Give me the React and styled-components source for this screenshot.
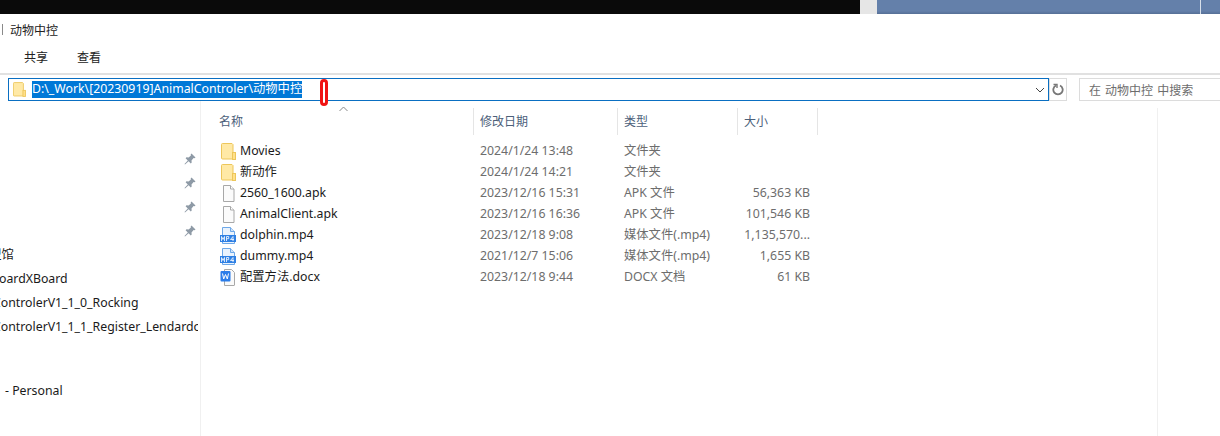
import React from 'react'
import styled, { createGlobalStyle } from 'styled-components'

const GlobalStyle = createGlobalStyle`
    html, body {
        margin: 0;
        padding: 0;
        background: #fff;
    }
    body {
        font-family: "Noto Sans", "Noto Sans CJK SC", sans-serif;
        font-size: 12px;
        color: #1a1a1a;
    }
`;

const Page = styled.div`
    position: relative;
    width: 1220px;
    height: 436px;
    overflow: hidden;
    display: flex;
    flex-direction: column;
    background: #fff;
`;

const TopStrip = styled.div`
    height: 14px;
    flex: none;
    display: grid;
    grid-template-columns: 860px 17px 1fr;
`;

const StripPart = styled.div`
    background: ${p => p.$bg};
`;

const WallpaperPart = styled.div`
    background: linear-gradient(#6480aa 0, #6480aa 11px, #566f96 14px);
    padding-left: 323px;
`;

const WallpaperTick = styled.div`
    width: 1px;
    height: 14px;
    background: #d8e0ea;
`;

const TitleRow = styled.div`
    height: 30px;
    flex: none;
    display: flex;
    align-items: center;
    padding: 1px 0 0 2px;
    box-sizing: border-box;
    gap: 7px;
`;

const TitleTick = styled.div`
    width: 1px;
    height: 11px;
    background: #8a8a8a;
`;

const TitleText = styled.div`
    font-size: 12px;
    color: #222;
`;

const TabRow = styled.div`
    height: 27px;
    flex: none;
    display: flex;
    align-items: center;
    padding: 0 0 2px 24px;
    gap: 29px;
    border-bottom: 2px solid #e1e1e1;
    box-sizing: content-box;
`;

const Tab = styled.div`
    font-size: 12px;
    line-height: 16px;
    color: #222;
`;

const AddressRow = styled.div`
    height: 23px;
    flex: none;
    margin-top: 3px;
    display: flex;
    padding-left: 8px;
`;

const AddressBox = styled.div`
    width: 1041px;
    box-sizing: border-box;
    border: 1px solid #0a6fc2;
    display: flex;
    align-items: center;
    padding: 0 3px 0 4px;
`;

const Selected = styled.span`
    background: #0078d7;
    color: #fff;
    font-size: 12.3px;
    line-height: 16px;
    margin-left: 6px;
    padding-bottom: 1px;
    white-space: nowrap;
`;

const Chevron = styled.svg`
    margin-left: auto;
`;

const RefreshBox = styled.div`
    width: 18px;
    box-sizing: border-box;
    border: 1px solid #dcdcdc;
    display: flex;
    align-items: center;
    justify-content: center;
`;

const SearchBox = styled.div`
    flex: 1;
    margin-left: 12px;
    box-sizing: border-box;
    border: 1px solid #dcdcdc;
    border-right: none;
    display: flex;
    align-items: center;
    padding-left: 9px;
    font-size: 12px;
    word-spacing: 1px;
    color: #6d6d6d;
    white-space: pre;
`;

const Body = styled.div`
    flex: 1;
    display: flex;
    padding-top: 7px;
    min-height: 0;
`;

const Sidebar = styled.div`
    width: 200px;
    flex: none;
    box-sizing: content-box;
    border-right: 1px solid #f0f0f0;
    margin-top: -7px;
    padding-top: 46px;
    overflow: hidden;
`;

const NavRow = styled.div`
    height: 24px;
    display: flex;
    align-items: center;
    justify-content: ${p => (p.$pin ? 'flex-end' : 'flex-start')};
    padding-right: ${p => (p.$pin ? '4px' : '2px')};
    margin-top: ${p => p.$gap || 0}px;
    white-space: nowrap;
    font-size: 12.3px;
    color: #1a1a1a;
`;

const NavClip = styled.div`
    flex: 1;
    min-width: 0;
    overflow: hidden;
`;

const NavText = styled.div`
    margin-left: ${p => p.$shift}px;
    padding-bottom: 2px;
`;

const Main = styled.div`
    flex: none;
    width: 956px;
    border-right: 1px solid #f0f0f0;
`;

const HeaderRow = styled.div`
    height: 27px;
    display: grid;
    grid-template-columns: 273px 144px 120px 80px;
`;

const HeaderCell = styled.div`
    display: flex;
    align-items: center;
    padding-left: ${p => p.$pad}px;
    padding-bottom: 2px;
    border-right: 1px solid #e5e5e5;
    color: #4c607a;
    font-size: 12px;
    box-sizing: border-box;
`;

const FileList = styled.div`
    margin-top: 6px;
`;

const FileRow = styled.div`
    height: 21px;
    display: grid;
    grid-template-columns: 273px 144px 120px 72px;
    align-items: center;
    font-size: 12.3px;
    line-height: 17px;
`;

const NameCell = styled.div`
    display: flex;
    align-items: center;
    padding-left: 20px;
    color: #1a1a1a;
    white-space: nowrap;
`;

const NameText = styled.span`
    padding-bottom: 2px;
`;

const IconSlot = styled.span`
    width: 19px;
    height: 17px;
    flex: none;
    display: flex;
    align-items: center;
`;

const MetaCell = styled.div`
    padding: 0 0 2px 6px;
    color: #6d6d6d;
    white-space: nowrap;
`;

const SizeCell = styled.div`
    text-align: right;
    padding-bottom: 2px;
    color: #6d6d6d;
    white-space: nowrap;
`;

const RedMarker = styled.div`
    position: absolute;
    left: 320px;
    top: 79px;
    width: 8px;
    height: 27px;
    box-sizing: border-box;
    border: 3px solid #f01414;
    border-radius: 4px;
    background: #fff;
`;

const SortCaret = styled.svg`
    position: absolute;
    left: 339px;
    top: 106px;
`;

const FolderIcon = ({ size = 16 }) => (
    <svg width={size - 1} height={size + 1} viewBox="0 0 15 17">
        <path d="M1.5 0.5h9.5l1 1v14.500h-10.500a1 1 0 0 1-1-1v-13.500a1 1 0 0 1 1-1z" fill="#ffe9a6" stroke="#edc65a"/>
        <rect x="11.500" y="9.500" width="3" height="7" fill="#ffe08a" stroke="#edc65a"/>
    </svg>
)

const FileIcon = () => (
    <svg width="15" height="17" viewBox="0 0 15 17">
        <path d="M2.500 0.500h7l3.500 3.500v12.500h-10.500z" fill="#fbfbfb" stroke="#a8a8a8"/>
        <path d="M9.500 0.500v3.500h3.500" fill="#fff" stroke="#a8a8a8"/>
    </svg>
)

const VideoIcon = () => (
    <svg width="16" height="17" viewBox="0 0 16 17" style={{ marginLeft: -1 }}>
        <path d="M2.500 0.500h8l4 4v12h-12z" fill="#eaf3fd" stroke="#6ea8e8"/>
        <path d="M10.500 0.500v4h4" fill="#cfe2f8" stroke="#6ea8e8"/>
        <rect x="0" y="8" width="16" height="7" fill="#2f80e4"/>
        <path d="M1.500 14v-4.500l1.500 3 1.500-3v4.500M6.500 14v-4.500h2.200v2.200h-2.200M13 14v-4.500l-2.500 3h3.500" fill="none" stroke="#fff" strokeWidth="0.800"/>
    </svg>
)

const WordIcon = () => (
    <svg width="16" height="17" viewBox="0 0 16 17" style={{ marginLeft: -1 }}>
        <path d="M4.500 0.500h7l3 3v12.500a0.500 0.500 0 0 1-0.500 0.500h-9.500z" fill="#fafafa" stroke="#a8a8a8"/>
        <rect x="0.500" y="2" width="10" height="10.500" rx="1" fill="#2b7de9"/>
        <path d="M2.500 4.500l1.200 5.500 1.800-4.500 1.800 4.500 1.200-5.500" fill="none" stroke="#fff" strokeWidth="1"/>
    </svg>
)

const PinIcon = () => (
    <svg width="12" height="12" viewBox="0 0 12 12">
        <path d="M7.500 0.500l4 4-1 .8-.9-.2-2.100 2.300.2 2.100-.9.900-2.200-2.200-3.600 3.300-.5-.5 3.300-3.600-2.200-2.200.9-.9 2.100.2 2.300-2.100-.2-.9z" fill="#8e9aa6"/>
    </svg>
)

const files = [
    { name: 'Movies', date: '2024/1/24 13:48', type: '文件夹', size: '', icon: <FolderIcon /> },
    { name: '新动作', date: '2024/1/24 14:21', type: '文件夹', size: '', icon: <FolderIcon /> },
    { name: '2560_1600.apk', date: '2023/12/16 15:31', type: 'APK 文件', size: '56,363 KB', icon: <FileIcon /> },
    { name: 'AnimalClient.apk', date: '2023/12/16 16:36', type: 'APK 文件', size: '101,546 KB', icon: <FileIcon /> },
    { name: 'dolphin.mp4', date: '2023/12/18 9:08', type: '媒体文件(.mp4)', size: '1,135,570...', icon: <VideoIcon /> },
    { name: 'dummy.mp4', date: '2021/12/7 15:06', type: '媒体文件(.mp4)', size: '1,655 KB', icon: <VideoIcon /> },
    { name: '配置方法.docx', date: '2023/12/18 9:44', type: 'DOCX 文档', size: '61 KB', icon: <WordIcon /> },
]

const navItems = [
    { text: '模型馆', shift: -23, gap: 0 },
    { text: 'BoardXBoard', shift: -9, gap: 0 },
    { text: 'ControlerV1_1_0_Rocking', shift: -7, gap: 0 },
    { text: 'ControlerV1_1_1_Register_Lendardoc', shift: -7, gap: 0 },
    { text: '- Personal', shift: 5, gap: 40 },
]

const App = () => (
    <Page>
        <GlobalStyle />
        <TopStrip>
            <StripPart $bg="#0a0a0a" />
            <StripPart $bg="#e6e6e6" />
            <WallpaperPart><WallpaperTick /></WallpaperPart>
        </TopStrip>
        <TitleRow>
            <TitleTick />
            <TitleText>动物中控</TitleText>
        </TitleRow>
        <TabRow>
            <Tab>共享</Tab>
            <Tab>查看</Tab>
        </TabRow>
        <AddressRow>
            <AddressBox>
                <FolderIcon size={14} />
                <Selected>D:\_Work\[20230919]AnimalControler\动物中控</Selected>
                <Chevron width="10" height="6" viewBox="0 0 10 6">
                    <path d="M1 1l4 4 4-4" fill="none" stroke="#444" strokeWidth="1"/>
                </Chevron>
            </AddressBox>
            <RefreshBox>
                <svg width="12" height="13" viewBox="0 0 12 13">
                    <path d="M4 2.500a4.700 4.700 0 1 0 4 0" fill="none" stroke="#777" strokeWidth="1.800"/>
                    <path d="M1.500 1.500h3.500v3.500" fill="none" stroke="#777" strokeWidth="1.400"/>
                </svg>
            </RefreshBox>
            <SearchBox>在 动物中控 中搜索</SearchBox>
        </AddressRow>
        <Body>
            <Sidebar>
                {[0, 1, 2, 3].map(i => (
                    <NavRow $pin key={i}><PinIcon /></NavRow>
                ))}
                {navItems.map(item => (
                    <NavRow key={item.text} $gap={item.gap}>
                        <NavClip>
                            <NavText $shift={item.shift}>{item.text}</NavText>
                        </NavClip>
                    </NavRow>
                ))}
            </Sidebar>
            <Main>
                <HeaderRow>
                    <HeaderCell $pad={18}>名称</HeaderCell>
                    <HeaderCell $pad={6}>修改日期</HeaderCell>
                    <HeaderCell $pad={6}>类型</HeaderCell>
                    <HeaderCell $pad={6}>大小</HeaderCell>
                </HeaderRow>
                <FileList>
                    {files.map(file => (
                        <FileRow key={file.name}>
                            <NameCell>
                                <IconSlot>{file.icon}</IconSlot>
                                <NameText>{file.name}</NameText>
                            </NameCell>
                            <MetaCell>{file.date}</MetaCell>
                            <MetaCell>{file.type}</MetaCell>
                            <SizeCell>{file.size}</SizeCell>
                        </FileRow>
                    ))}
                </FileList>
            </Main>
        </Body>
        <SortCaret width="9" height="6" viewBox="0 0 9 6">
            <path d="M0.500 5l4-4 4 4" fill="none" stroke="#888" strokeWidth="1"/>
        </SortCaret>
        <RedMarker />
    </Page>
);

export default App;
